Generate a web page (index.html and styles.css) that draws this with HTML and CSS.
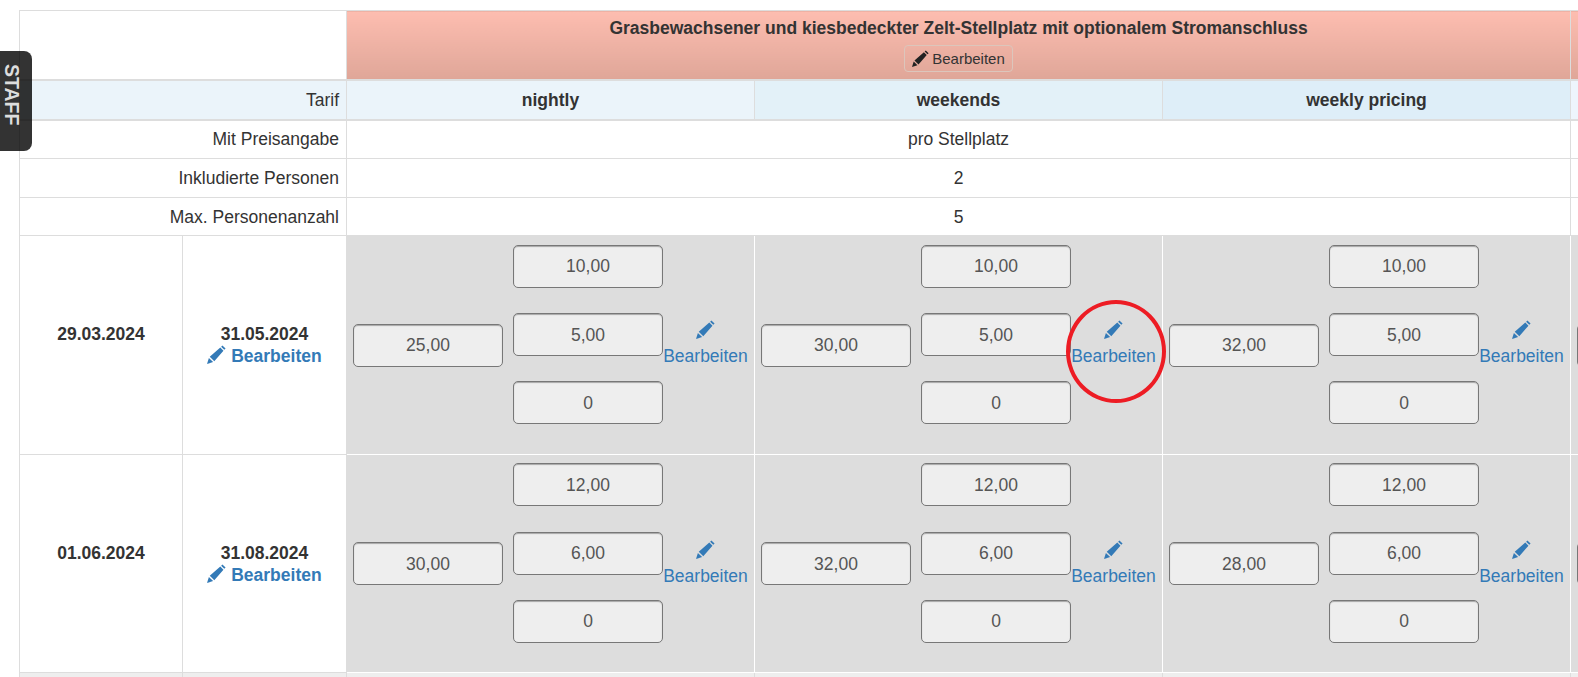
FILE: index.html
```html
<!DOCTYPE html>
<html lang="de">
<head>
<meta charset="utf-8">
<title>Tarife</title>
<link rel="stylesheet" href="styles.css">
</head>
<body>
<svg class="defs" width="0" height="0" aria-hidden="true"><symbol id="pencil" viewBox="0 0 18 18"><path d="M13.4 1.6l1.2-1.2 3 3-1.2 1.2zM2.6 11.1L12.6 2.4l3 3L6.9 15.4zM1.8 12.2l4 4L0 18z"/></symbol></svg>
<a class="staff" href="#">STAFF</a>
<main class="wrap">
<table class="rates">
<colgroup><col class="c-from"><col class="c-to"><col class="c-a"><col class="c-a"><col class="c-a"><col class="c-a"></colgroup>
<tbody>
<tr class="r-title">
<td colspan="2"></td>
<td colspan="3" class="title"><div class="title-text">Grasbewachsener und kiesbedeckter Zelt-Stellplatz mit optionalem Stromanschluss</div><a class="btn-edit" href="#"><svg class="ico-sm"><use href="#pencil"/></svg> Bearbeiten</a></td>
<td class="title"></td>
</tr>
<tr class="r-tarif">
<td colspan="2" class="label tarif-1">Tarif</td>
<th class="tarif-1">nightly</th>
<th class="tarif-2">weekends</th>
<th class="tarif-3">weekly pricing</th>
<th class="tarif-4"></th>
</tr>
<tr class="r-info"><td colspan="2" class="label">Mit Preisangabe</td><td colspan="3" class="center">pro Stellplatz</td><td></td></tr>
<tr class="r-info"><td colspan="2" class="label">Inkludierte Personen</td><td colspan="3" class="center">2</td><td></td></tr>
<tr class="r-info r-info-last"><td colspan="2" class="label">Max. Personenanzahl</td><td colspan="3" class="center">5</td><td></td></tr>

<tr class="r-price r-price-1">
<td class="date"><div class="date-from">29.03.2024</div></td>
<td class="date"><div>31.05.2024</div><a class="date-edit" href="#"><svg class="ico"><use href="#pencil"/></svg> Bearbeiten</a></td>
<td class="price"><div class="price-in"><span class="field">25,00</span><div class="stack"><span class="field">10,00</span><span class="field">5,00</span><span class="field">0</span></div><a class="edit" href="#"><svg class="ico"><use href="#pencil"/></svg><span>Bearbeiten</span></a></div></td>
<td class="price"><div class="price-in"><span class="field">30,00</span><div class="stack"><span class="field">10,00</span><span class="field">5,00</span><span class="field">0</span></div><a class="edit" href="#"><svg class="ico"><use href="#pencil"/></svg><span>Bearbeiten</span></a></div></td>
<td class="price"><div class="price-in"><span class="field">32,00</span><div class="stack"><span class="field">10,00</span><span class="field">5,00</span><span class="field">0</span></div><a class="edit" href="#"><svg class="ico"><use href="#pencil"/></svg><span>Bearbeiten</span></a></div></td>
<td class="price"><div class="price-in"><span class="field"></span></div></td>
</tr>

<tr class="r-price r-price-2">
<td class="date"><div class="date-from">01.06.2024</div></td>
<td class="date"><div>31.08.2024</div><a class="date-edit" href="#"><svg class="ico"><use href="#pencil"/></svg> Bearbeiten</a></td>
<td class="price"><div class="price-in"><span class="field">30,00</span><div class="stack"><span class="field">12,00</span><span class="field">6,00</span><span class="field">0</span></div><a class="edit" href="#"><svg class="ico"><use href="#pencil"/></svg><span>Bearbeiten</span></a></div></td>
<td class="price"><div class="price-in"><span class="field">32,00</span><div class="stack"><span class="field">12,00</span><span class="field">6,00</span><span class="field">0</span></div><a class="edit" href="#"><svg class="ico"><use href="#pencil"/></svg><span>Bearbeiten</span></a></div></td>
<td class="price"><div class="price-in"><span class="field">28,00</span><div class="stack"><span class="field">12,00</span><span class="field">6,00</span><span class="field">0</span></div><a class="edit" href="#"><svg class="ico"><use href="#pencil"/></svg><span>Bearbeiten</span></a></div></td>
<td class="price"><div class="price-in"><span class="field"></span></div></td>
</tr>

<tr class="r-next"><td></td><td></td><td></td><td></td><td></td><td></td></tr>
</tbody>
</table>
</main>
<div class="marker" aria-hidden="true"></div>
</body>
</html>
```

FILE: styles.css
```css
* { box-sizing: border-box; }
html, body { margin: 0; height: 100%; overflow: hidden; background: #fff; }
body { font-family: "Liberation Sans", Arial, sans-serif; font-size: 17.5px; line-height: 22px; color: #333; }
.defs { position: absolute; }
a { text-decoration: none; color: #337ab7; }

.wrap { padding: 10px 0 0 19px; width: 2200px; }
.rates { border-collapse: collapse; table-layout: fixed; width: 1959px; }
.c-from { width: 163px; }
.c-to { width: 164px; }
.c-a { width: 408px; }
.rates td, .rates th { border: 1px solid #ddd; padding: 0; }

.r-title td { height: 69px; border-bottom: 2px solid #ddd; vertical-align: top; }
.title { background: linear-gradient(#fdbdb0, #dfa698); text-align: center; font-weight: 700; }
.title-text { padding-top: 6px; }
.btn-edit { display: inline-flex; align-items: center; gap: 3px; height: 27px; margin-top: 6px; padding: 0 7px; border: 1px solid #dcc6bc; border-radius: 4px; font-size: 15px; font-weight: 400; color: #333; }
.ico-sm { width: 17px; height: 17px; fill: #222; }

.r-tarif td, .r-tarif th { height: 40px; border-bottom: 2px solid #ddd; }
.r-tarif th { font-weight: 700; text-align: center; }
.tarif-1 { background: #ebf4fa; }
.tarif-2 { background: #e3f1f8; }
.tarif-3 { background: #deeef8; }
.tarif-4 { background: #eef5fc; }

.r-info td { height: 39px; }
.r-info-last td { height: 38px; }
.label { text-align: right; padding-right: 7px !important; }
.center { text-align: center; }

.r-price-1 td { height: 219px; }
.r-price-2 td { height: 218px; }
.date { text-align: center; font-weight: 700; color: #333; }
.date-from { padding-bottom: 22px; }
.date-edit { display: block; }
.ico { width: 19px; height: 19px; fill: #337ab7; vertical-align: -2px; }

.rates .price { background: #ddd; border-color: #fff; }
.price-in { display: flex; align-items: center; padding-left: 6px; color: #555; }
.stack { display: flex; flex-direction: column; margin-left: 10px; }
.field { flex: none; display: flex; align-items: center; justify-content: center; width: 150px; height: 43px; background: #eee; border: 1px solid #777; border-radius: 5px; box-shadow: inset 0 1px 1px rgba(0,0,0,.3); }
.stack .field { margin-bottom: 25.4px; }
.stack .field:last-child { margin-bottom: 21px; }
.edit { flex: none; display: flex; flex-direction: column; align-items: center; width: 85px; padding-bottom: 4px; font-weight: 400; }
.r-price-2 .edit { padding-bottom: 0; }
.edit .ico { margin-bottom: 6px; }

.r-next td { height: 40px; background: #eee; }

.staff { position: absolute; left: 0; top: 51px; width: 32px; height: 100px; display: flex; align-items: center; justify-content: center; padding: 0 9px 13px 0; background: rgba(0,0,0,.8); border-radius: 0 8px 8px 0; color: #ddd; font-size: 19.5px; font-weight: 700; line-height: 24px; writing-mode: vertical-rl; }

.marker { position: absolute; left: 1066px; top: 300px; width: 100px; height: 103px; border: 4px solid #ed1c24; border-radius: 50%; }
```
